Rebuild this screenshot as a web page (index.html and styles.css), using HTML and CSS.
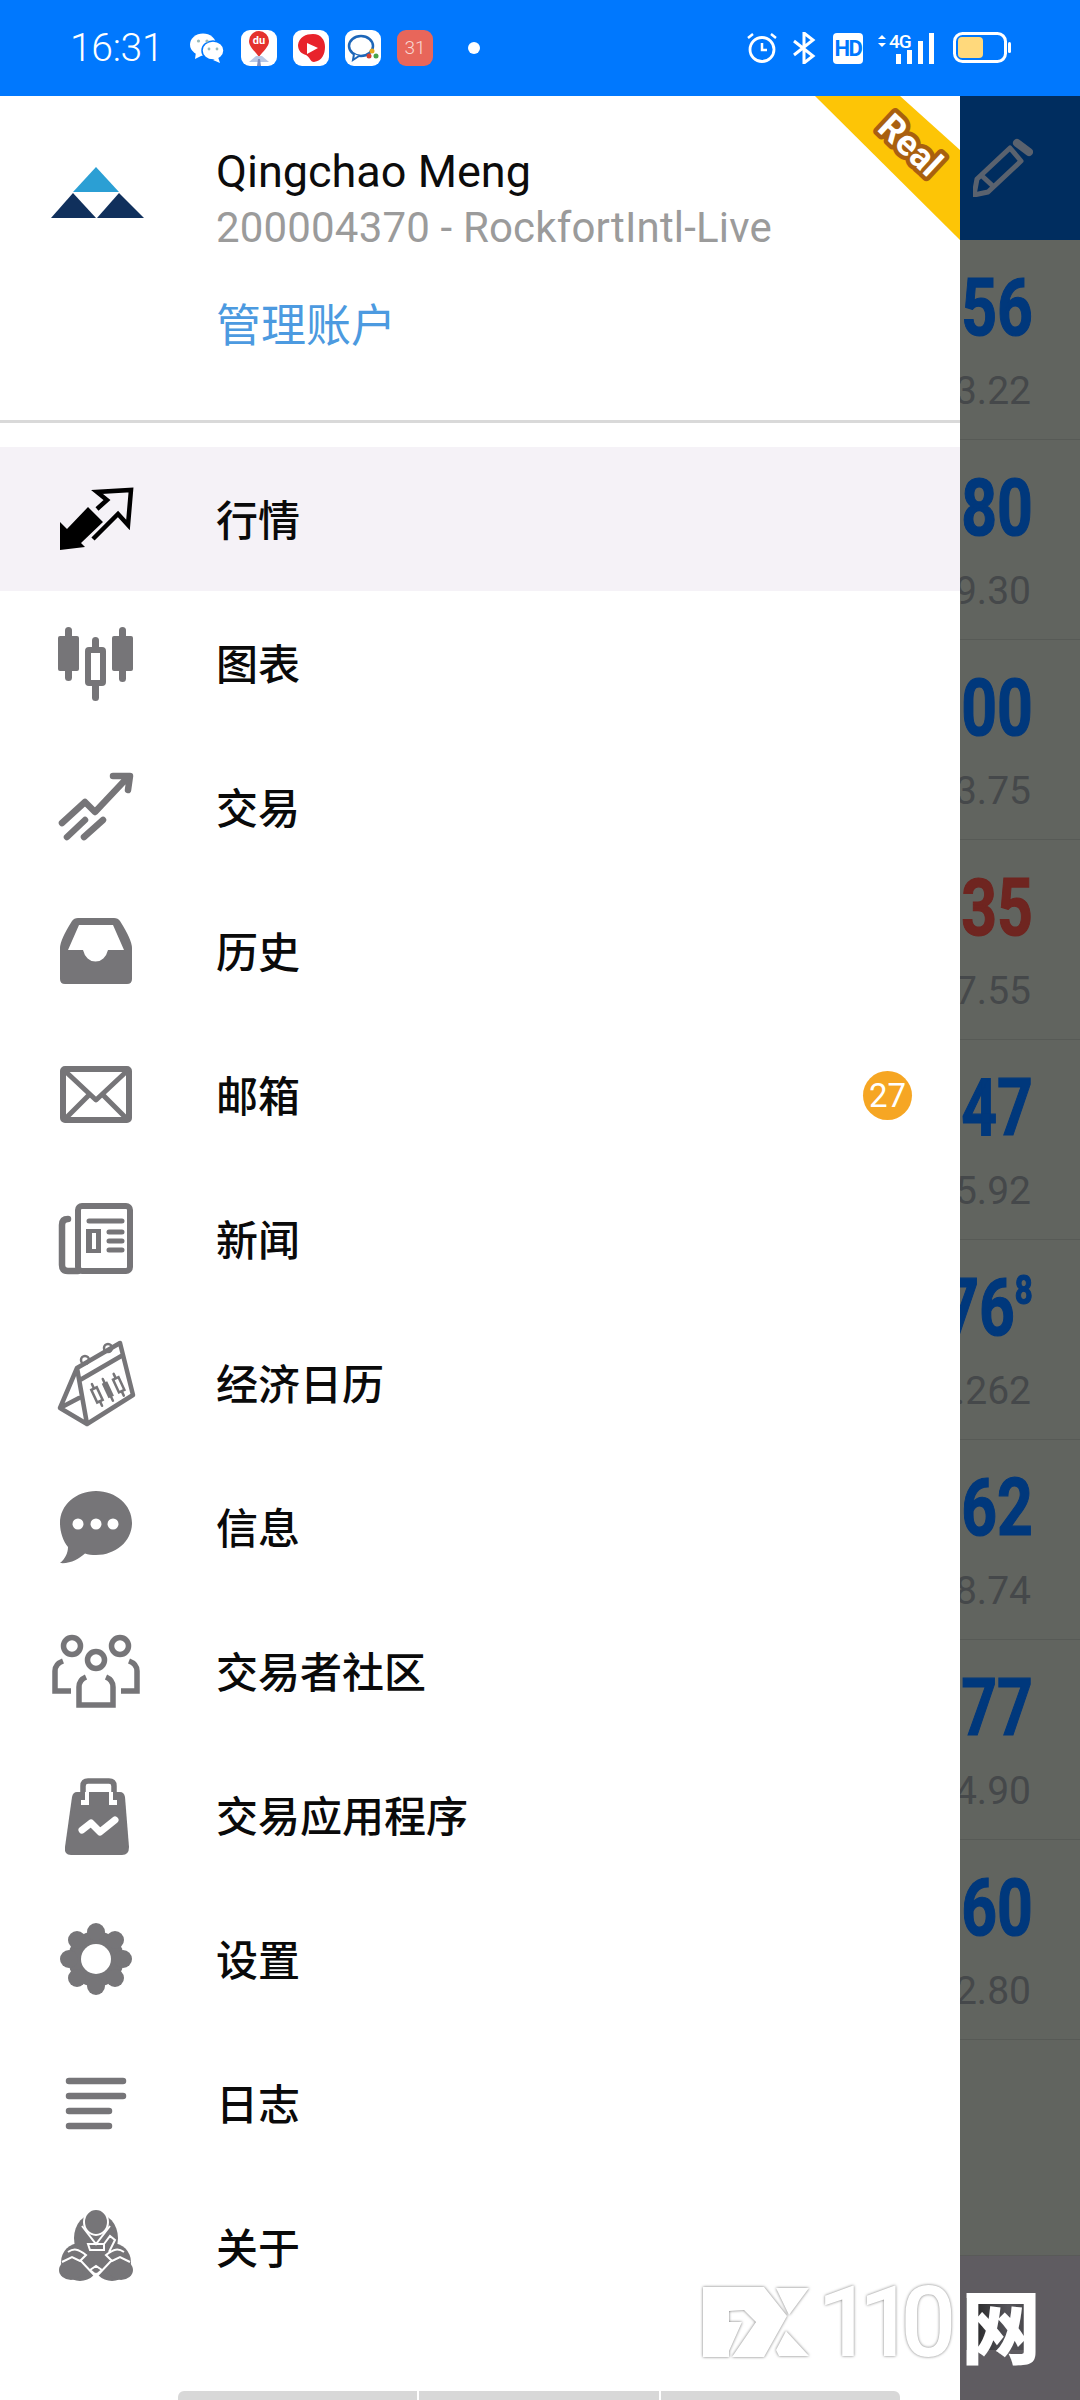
FILE: index.html
```html
<!DOCTYPE html>
<html lang="zh">
<head>
<meta charset="utf-8">
<title>MetaTrader</title>
<link rel="stylesheet" href="styles.css">
</head>
<body>
<div class="screen">
  <header class="status">
    <div class="status-left">
      <span class="time">16:31</span>
      <svg class="note wechat" viewBox="0 0 34 30"><ellipse cx="13" cy="11.500" rx="13" ry="11" fill="#fff"/><path d="M6 19l-1 7 8-4z" fill="#fff"/><ellipse cx="23" cy="17.500" rx="11" ry="9.500" fill="#fff" stroke="#0078fe" stroke-width="1.500"/><path d="M28 24l2 6-7-3z" fill="#fff"/><circle cx="8.500" cy="8" r="1.600" fill="#9bb"/><circle cx="17" cy="8" r="1.600" fill="#9bb"/><circle cx="19" cy="16" r="1.400" fill="#9bb"/><circle cx="27" cy="16" r="1.400" fill="#9bb"/></svg>
      <svg class="app" viewBox="0 0 36 36"><rect width="36" height="36" rx="9" fill="#fff"/><path d="M18 27C14 21 8 17 8 11a10 10 0 0 1 20 0c0 6-6 10-10 16z" fill="#e5322d"/><text x="18" y="14" class="du">du</text><path d="M8 32l7-6 6 0 7 6z" fill="#b9c9e6"/><path d="M16 36l1-7h2l1 7z" fill="#7f8fc0"/></svg>
      <svg class="app" viewBox="0 0 36 36"><rect width="36" height="36" rx="9" fill="#fff"/><path d="M5 15C6 7 13 4 20 4c8 0 12 6 12 13s-3 14-11 15c-4 0-4-5-8-7-4-1-8-4-8-10z" fill="#e8232b"/><path d="M14 13l11 5-11 6z" fill="#fff"/></svg>
      <svg class="app" viewBox="0 0 36 36"><rect width="36" height="36" rx="9" fill="#fff"/><ellipse cx="16" cy="16" rx="12" ry="10" fill="none" stroke="#1d66b8" stroke-width="2.500"/><path d="M9 24l-1 6 6-4" fill="#fff" stroke="#1d66b8" stroke-width="2"/><circle cx="27" cy="21" r="2.500" fill="#e6a91f"/><circle cx="24" cy="26" r="2.500" fill="#d8402e"/><circle cx="31" cy="26" r="2.500" fill="#48a34a"/></svg>
      <span class="cal">31</span>
      <span class="dot"></span>
    </div>
    <div class="status-right">
      <svg class="sys alarm" viewBox="0 0 32 32"><circle cx="16" cy="17.500" r="12" fill="none" stroke="#fff" stroke-width="2.800"/><path d="M16 11v7h5M2 6l5-4M30 6l-5-4" fill="none" stroke="#fff" stroke-width="2.500"/></svg>
      <svg class="sys bt" viewBox="0 0 24 32"><path d="M2 9l19 15-9 7V1l9 7L2 23" fill="none" stroke="#fff" stroke-width="3"/></svg>
      <span class="hd">HD</span>
      <svg class="sys net" viewBox="0 0 57 32"><path d="M0 7l4-4 4 4zM0 11l4 4 4-4z" fill="#fff"/><text x="11" y="16" class="four-g">4G</text><rect x="18" y="22" width="5" height="10" fill="#fff"/><rect x="29" y="18" width="5" height="14" fill="#fff"/><rect x="40" y="9" width="5" height="23" fill="#fff"/><rect x="51" y="1" width="5" height="31" fill="#fff"/></svg>
      <svg class="sys batt" viewBox="0 0 58 32"><rect x="1.500" y="1.500" width="51" height="28" rx="8" fill="none" stroke="#fff" stroke-width="3"/><rect x="5" y="5" width="25" height="21" rx="4" fill="#ffd97c"/><rect x="55" y="10" width="3" height="11" rx="1.500" fill="#fff"/></svg>
    </div>
  </header>

  <div class="body">
    <nav class="drawer">
      <svg class="ribbon" viewBox="0 0 160 144"><polygon points="15,0 100,0 160,54 160,144" fill="#fdc506"/><text class="ribbon-text" x="0" y="0" transform="translate(102 58) rotate(43)">Real</text></svg>
      <section class="account">
        <svg class="logo" viewBox="0 0 96 96"><polygon points="48,23 25,48 71,48" fill="#2b9fd4"/><polygon points="3,74 25,49 48,74" fill="#10305c"/><polygon points="49,74 71,49 96,74" fill="#10305c"/></svg>
        <div class="account-text">
          <div class="name">Qingchao Meng</div>
          <div class="login">200004370 - RockfortIntl-Live</div>
          <div class="manage">管理账户</div>
        </div>
      </section>
      <div class="rule"></div>
      <ul class="menu">
        <li class="item active">
          <svg class="icon" viewBox="0 0 96 96"><polygon points="12,78 12,50 19,57 40,35 55,50 33,71 37,75" fill="#000"/><path d="M49 37l10-9-10-8 34-2-3 35-10-11-25 25" fill="none" stroke="#000" stroke-width="4.500"/></svg>
          <span class="label">行情</span>
        </li>
        <li class="item">
          <svg class="icon" viewBox="0 0 96 96"><g class="fill"><rect x="10" y="20" width="21" height="35" rx="2"/><rect x="17" y="11" width="7" height="54" rx="3.500"/><rect x="64" y="20" width="21" height="35" rx="2"/><rect x="71" y="11" width="7" height="55" rx="3.500"/><rect x="44" y="21" width="7" height="64" rx="3.500"/></g><rect class="hole-line" x="40" y="34" width="15" height="33" rx="1"/></svg>
          <span class="label">图表</span>
        </li>
        <li class="item">
          <svg class="icon" viewBox="0 0 96 96"><path class="line" d="M14 63l23-21 10 10 33-35M65 16h17l-2 14M19 77l18-17M36 77l19-17"/></svg>
          <span class="label">交易</span>
        </li>
        <li class="item">
          <svg class="icon" viewBox="0 0 96 96"><path class="fill" fill-rule="evenodd" d="M12 75V44Q12 36 24 17Q26 14 30 14H66Q70 14 72 17Q84 36 84 44V75Q84 80 79 80H17Q12 80 12 75ZM20 46H35A13 16 0 0 0 60 46H76L65 21H31Z"/></svg>
          <span class="label">历史</span>
        </li>
        <li class="item">
          <svg class="icon" viewBox="0 0 96 96"><rect class="line sq" x="15" y="21" width="66" height="51" rx="2"/><path class="line thin" d="M17 23l31 29 31-29M17 71l24-24M79 71L55 47"/></svg>
          <span class="label">邮箱</span>
          <span class="badge">27</span>
        </li>
        <li class="item">
          <svg class="icon" viewBox="0 0 96 96"><rect class="line sq" x="30" y="14" width="52" height="65" rx="4"/><path class="line" d="M20 27q-6 0-6 6v40q0 6 6 6h10"/><path class="fill" fill-rule="evenodd" d="M38 37h15v24H38zM44 41v16h4V41z"/><path class="line thin" d="M41 29h33M61 40h13M61 49h13M61 58h13"/></svg>
          <span class="label">新闻</span>
        </li>
        <li class="item">
          <svg class="icon" viewBox="0 0 96 96"><path class="line sm" d="M29 32L72 7l13 52-46 29zM29 32L12 72l27 16M12 72l19-10M32 44l43-25"/><circle class="ring" cx="37" cy="24" r="4"/><circle class="ring" cx="60" cy="12" r="4"/><g transform="rotate(-25 59 52)"><path class="line xs" d="M47 42v24M59 42v24M71 42v24"/><rect class="cand-o" x="44" y="47" width="6" height="14"/><rect class="fill" x="56" y="46" width="6" height="16"/><rect class="cand-o" x="68" y="47" width="6" height="14"/></g></svg>
          <span class="label">经济日历</span>
        </li>
        <li class="item">
          <svg class="icon" viewBox="0 0 96 96"><path class="fill" d="M12 43C12 25 28 11 48 11s36 14 36 32-16 32-36 32c-4 0-8-.500-11-1.500C31 79 22 84 12 83c5-4 8-10 8-16-5-6-8-15-8-24z"/><circle class="hole" cx="30" cy="44" r="5.500"/><circle class="hole" cx="48" cy="44" r="5.500"/><circle class="hole" cx="65" cy="44" r="5.500"/></svg>
          <span class="label">信息</span>
        </li>
        <li class="item">
          <svg class="icon" viewBox="0 0 96 96"><circle class="line open" cx="24" cy="22" r="8.500"/><circle class="line open" cx="72" cy="22" r="8.500"/><circle class="line open" cx="48" cy="36" r="8.500"/><path class="line butt" d="M15 37q-8 3-8 10v20h16M81 37q8 3 8 10v20H73M38 53q-7 3-7 10v18h34V63q0-7-7-10"/></svg>
          <span class="label">交易者社区</span>
        </li>
        <li class="item">
          <svg class="icon" viewBox="0 0 96 96"><path class="fill" d="M29 24H72Q76 24 77 29L81 79Q81 87 74 87H23Q16 87 17 79L24 29Q25 24 29 24Z"/><path class="line butt thin" d="M35 25V18q0-5 5-5h21q5 0 5 5v7"/><path class="white" d="M33 32h4v-8h4v13h-8zM61 24h4v8h4v5h-8z"/><path class="white-line" d="M34 62l9-7 9 9 15-12"/></svg>
          <span class="label">交易应用程序</span>
        </li>
        <li class="item">
          <svg class="icon" viewBox="0 0 96 96"><g class="fill"><circle cx="48" cy="47" r="28"/><circle cx="75" cy="47" r="9"/><circle cx="67" cy="28" r="9"/><circle cx="48" cy="20" r="9"/><circle cx="29" cy="28" r="9"/><circle cx="21" cy="47" r="9"/><circle cx="29" cy="66" r="9"/><circle cx="48" cy="74" r="9"/><circle cx="67" cy="66" r="9"/></g><circle class="hole" cx="48" cy="47" r="15"/></svg>
          <span class="label">设置</span>
        </li>
        <li class="item">
          <svg class="icon" viewBox="0 0 96 96"><path class="line" d="M21 25h54M21 40h54M21 55h40M21 70h40"/></svg>
          <span class="label">日志</span>
        </li>
        <li class="item">
          <svg class="icon" viewBox="0 0 96 96"><g class="fill"><ellipse cx="48" cy="38" rx="22" ry="25"/><circle cx="32" cy="62" r="19"/><circle cx="64" cy="62" r="19"/><ellipse cx="23" cy="70" rx="12" ry="10"/><ellipse cx="73" cy="70" rx="12" ry="10"/></g><ellipse class="fill gap" cx="48" cy="22" rx="12" ry="13"/><path class="seam" d="M34 26l14 18 14-18M40 44h16v6H42zM56 44l6-8 5 4-6 12M20 52c6-4 10-3 18 3l-6 6-8-4-10 5M76 52c-6-4-10-3-18 3l6 6 8-4 10 5M33 61l15 16 15-16M42 70l6-4 6 4-6 5z"/></svg>
          <span class="label">关于</span>
        </li>
      </ul>
      <div class="tabs"><span class="tab first"></span><span class="tab"></span><span class="tab last"></span></div>
    </nav>

    <aside class="peek">
      <div class="peek-head">
        <svg class="pen" viewBox="0 0 60 60"><path d="M1 58l3-16L37 11l11 13-33 31zM8 38l14 13" fill="none" stroke="#5a626e" stroke-width="5" stroke-linejoin="round"/><path d="M44 6l12 9" fill="none" stroke="#5a626e" stroke-width="8" stroke-linecap="round"/></svg>
      </div>
      <div class="quote"><span class="big"><span class="digits">56</span></span><span class="small">3.22</span></div>
      <div class="quote"><span class="big"><span class="digits">80</span></span><span class="small">9.30</span></div>
      <div class="quote"><span class="big"><span class="digits">00</span></span><span class="small">3.75</span></div>
      <div class="quote"><span class="big down"><span class="digits">35</span></span><span class="small">7.55</span></div>
      <div class="quote"><span class="big"><span class="digits">47</span></span><span class="small">5.92</span></div>
      <div class="quote"><span class="big"><span class="digits">76<sup class="tick">8</sup></span></span><span class="small">.262</span></div>
      <div class="quote"><span class="big"><span class="digits">62</span></span><span class="small">8.74</span></div>
      <div class="quote"><span class="big"><span class="digits">77</span></span><span class="small">4.90</span></div>
      <div class="quote"><span class="big"><span class="digits">60</span></span><span class="small">2.80</span></div>
      <div class="peek-foot"></div>
    </aside>
  </div>

  <div class="watermark">
    <svg class="fx" viewBox="0 0 107 71"><polygon points="0,0 61,0 84,29 61,70 29,70 53,35 41,23 26,24 26,35 39,35 26,64 26,70 0,70"/><polygon points="73,1 106,1 86,28"/><polygon points="83,44 106,69 76,69 73,63"/></svg>
    <span class="wm-num">110</span>
    <span class="wm-cn">网</span>
  </div>
</div>
</body>
</html>
```

FILE: styles.css
```css
* { box-sizing: border-box; }
html, body { margin: 0; padding: 0; background: #fff; }
body { font-family: Roboto, "Noto Sans CJK SC", sans-serif; }
.screen { position: relative; width: 1080px; height: 2400px; overflow: hidden; display: flex; flex-direction: column; }

/* status bar */
.status { height: 96px; flex: none; background: #0078fe; display: flex; justify-content: space-between; align-items: center; padding: 0 69px 0 70px; color: #fff; }
.status-left, .status-right { display: flex; align-items: center; }
.time { width: 120px; font-size: 39px; font-weight: 300; letter-spacing: -.3px; line-height: 40px; }
.note { display: block; }
.wechat { width: 34px; height: 30px; margin-right: 17px; }
.app { width: 36px; height: 36px; margin-right: 16px; }
.du { fill: #fff; font: 700 11px Roboto, sans-serif; text-anchor: middle; }
.cal { width: 36px; height: 36px; border-radius: 9px; background: #e8665a; color: #f8d8d2; font-size: 19px; font-weight: 300; line-height: 36px; text-align: center; }
.dot { width: 12px; height: 12px; border-radius: 50%; background: #fff; margin-left: 35px; }
.sys { display: block; height: 32px; }
.alarm { width: 32px; margin-right: 14px; }
.bt { width: 24px; margin-right: 17px; }
.hd { width: 30px; height: 31px; border-radius: 4px; background: #fff; color: #0078fe; font-size: 22px; font-weight: 700; line-height: 31px; text-align: center; letter-spacing: -1.500px; margin-right: 15px; }
.net { width: 57px; margin-right: 18px; }
.four-g { fill: #fff; font: 500 19px Roboto, sans-serif; letter-spacing: -1px; }
.batt { width: 58px; }

/* body */
.body { flex: 1; display: flex; min-height: 0; }
.drawer { position: relative; width: 960px; flex: none; background: #fff; display: flex; flex-direction: column; }
.ribbon { position: absolute; top: 0; right: 0; width: 160px; height: 144px; }
.ribbon-text { font: 700 36px Roboto, sans-serif; text-anchor: middle; fill: #fff; stroke: #a9600f; stroke-width: 9px; paint-order: stroke; stroke-linejoin: round; }

.account { height: 324px; flex: none; padding: 48px 0 0 48px; display: flex; gap: 72px; }
.logo { width: 96px; height: 96px; flex: none; }
.name { font-size: 45px; line-height: 56px; color: #0c0c0c; }
.login { font-size: 42px; line-height: 56px; letter-spacing: .17px; color: #9b9b9b; }
.manage { font-family: "Noto Sans CJK SC", sans-serif; font-size: 45px; line-height: 60px; margin-top: 37px; color: #4c9ae0; }
.rule { height: 3px; flex: none; background: #d9d9d9; }

.menu { list-style: none; margin: 24px 0 0; padding: 0; }
.item { height: 144px; padding: 0 48px; display: flex; align-items: center; gap: 72px; }
.item.active { background: #f5f2f7; }
.icon { width: 96px; height: 96px; flex: none; margin-top: 2px; }
.label { flex: 1; font-family: "Noto Sans CJK SC", sans-serif; font-size: 42px; font-weight: 500; line-height: 60px; padding-bottom: 2px; color: #0a0a0a; }
.badge { width: 49px; height: 49px; border-radius: 50%; background: #f6a623; color: #fff; font-size: 33px; line-height: 49px; text-align: center; margin-top: 1px; }

.fill { fill: #767578; }
.gap { stroke: #fff; stroke-width: 2; }
.hole { fill: #fff; }
.line { fill: none; stroke: #767578; stroke-width: 6.500; stroke-linecap: round; stroke-linejoin: round; }
.line.sq { stroke-width: 6; }
.line.thin { stroke-width: 5; }
.line.sm { stroke-width: 4.500; }
.line.xs { stroke-width: 2.500; }
.line.open { stroke-width: 5.500; }
.line.butt { stroke-width: 5.500; stroke-linecap: butt; stroke-linejoin: miter; }
.hole-line { fill: #fff; stroke: #767578; stroke-width: 6; }
.ring { fill: none; stroke: #767578; stroke-width: 2.500; }
.cand-o { fill: #fff; stroke: #767578; stroke-width: 2.500; }
.white { fill: #fff; }
.white-line { fill: none; stroke: #fff; stroke-width: 7; stroke-linecap: round; stroke-linejoin: round; }
.seam { fill: none; stroke: #fff; stroke-width: 2; }

.tabs { margin-top: auto; padding: 0 60px 0 178px; display: flex; gap: 2px; height: 9px; }
.tab { flex: 1; background: #d8d8d8; }
.tab.first { border-radius: 6px 0 0 0; }
.tab.last { border-radius: 0 6px 0 0; }

/* part of the screen visible behind the drawer */
.peek { width: 120px; flex: none; background: #61645f; display: flex; flex-direction: column; overflow: hidden; }
.peek-head { height: 144px; flex: none; background: #002d5f; padding: 41px 0 0 13px; }
.pen { display: block; width: 60px; height: 60px; }
.quote { height: 200px; flex: none; padding: 28px 49px 0 0; display: flex; flex-direction: column; align-items: flex-end; border-bottom: 1px solid #575a56; }
.big { height: 80px; margin-right: -2px; display: flex; justify-content: flex-end; font-size: 80px; font-weight: 700; line-height: 80px; color: #00387c; -webkit-text-stroke: 1.200px currentColor; }
.big.down { color: #6f2520; }
.digits { display: block; flex: none; white-space: nowrap; transform: scaleX(.78); transform-origin: right center; }
.tick { font-size: 40px; line-height: 0; position: relative; top: -13px; vertical-align: 18px; }
.small { margin-top: 23px; font-size: 39px; line-height: 40px; color: #45484a; }
.peek-foot { margin-top: auto; height: 145px; flex: none; background: #5f5c61; border-top: 1px solid #595a58; }

/* watermark */
.watermark { position: absolute; left: 703px; top: 2287px; height: 71px; display: flex; align-items: flex-start; color: #fff; }
.fx { width: 107px; height: 71px; fill: #fff; flex: none; filter: drop-shadow(0 0 1.500px rgba(0,0,0,.55)); }
.wm-num { margin-left: 7px; width: 143px; font-size: 98px; font-weight: 500; line-height: 71px; letter-spacing: -14px; text-shadow: 0 0 3px rgba(0,0,0,.55); }
.wm-cn { position: relative; isolation: isolate; margin-left: 1px; font-family: "Noto Sans CJK SC", sans-serif; font-size: 80px; font-weight: 900; line-height: 71px; }
.wm-cn::before { content: ""; position: absolute; z-index: -1; left: 5px; top: 11px; width: 60px; height: 52px; background: linear-gradient(90deg, #1f1f1f, #55545a 70%, #4a494d); }
```
